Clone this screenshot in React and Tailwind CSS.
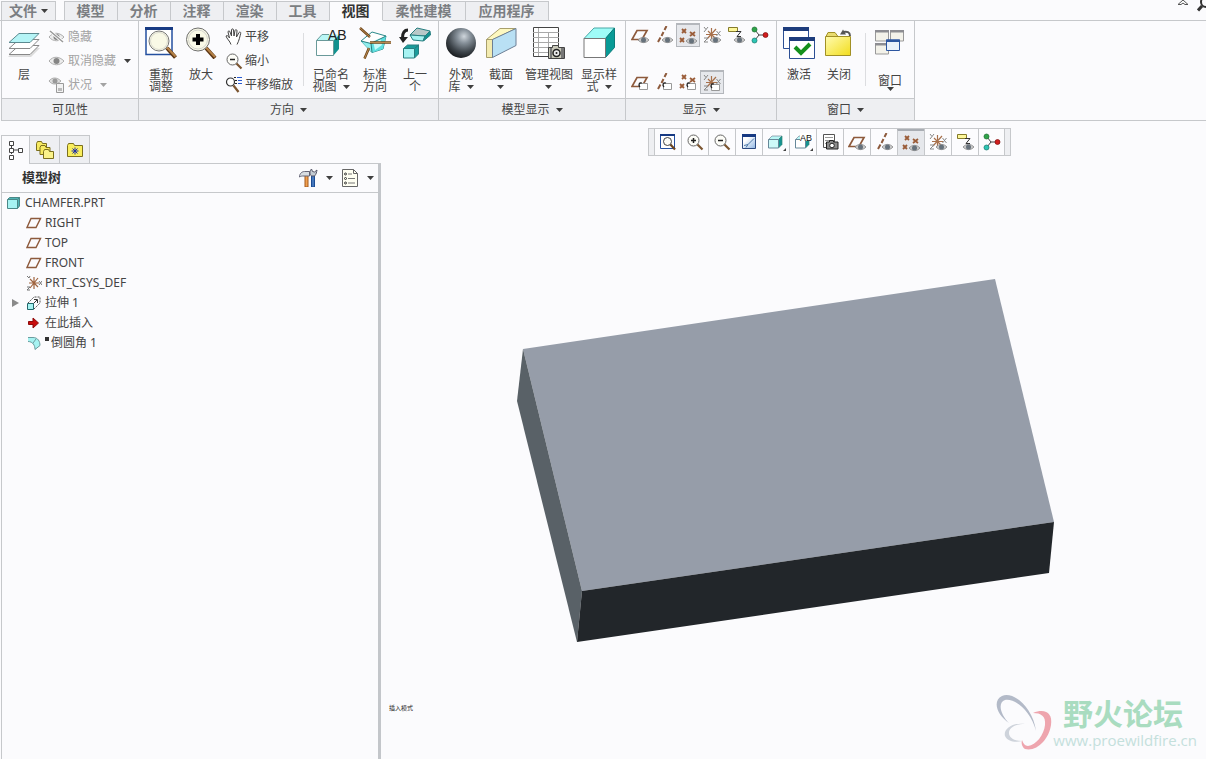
import clsx from "clsx";

const tabs = ["模型", "分析", "注释", "渲染", "工具", "视图", "柔性建模", "应用程序"];

const Icon = ({ w = 32, h = 32, className, children }) => (
  <svg width={w} height={h} viewBox={`0 0 ${w} ${h}`} className={clsx("flex-none", className)} fill="none" aria-hidden="true">
    {children}
  </svg>
);

const Caret = ({ light, className }) => (
  <Icon w={7} h={4} className={clsx("inline-block", className)}>
    <path d="M0 0h7L3.5 4z" fill={light ? "#a3a3a3" : "#3f3f3f"} />
  </Icon>
);

/* ---------- large ribbon icons ---------- */

const LayersIcon = () => (
  <Icon>
    <path d="M9 21h23l-9 9H0z" fill="#dcdcdc" />
    <path d="M11 18.500h20l-9 9H1z" fill="#fff" stroke="#888" />
    <path d="M11 12.500h20l-9 9H1z" fill="#fff" stroke="#888" />
    <path d="M11 6.500h20l-9 9H1z" fill="#b5f4f6" stroke="#5c8a90" />
  </Icon>
);

const RefitIcon = () => (
  <Icon>
    <path d="M1 1.500h26v26H1z" fill="#fff" stroke="#2450a0" strokeWidth="1.500" />
    <path d="M0 0h28v3H0z" fill="#173a83" />
    <path d="M22 21l8.500 9.500" stroke="#5b3514" strokeWidth="4" />
    <path d="M22 20.500l8.500 9" stroke="#b58246" strokeWidth="2" />
    <circle cx="14" cy="14" r="10" fill="#f9f9e6" stroke="#777" />
    <circle cx="14" cy="14" r="8.500" stroke="#dcdcd0" />
  </Icon>
);

const ZoomInBigIcon = () => (
  <Icon>
    <path d="M21 21l9 10" stroke="#5b3514" strokeWidth="4" />
    <path d="M21 20.500l9 9.500" stroke="#b58246" strokeWidth="2" />
    <circle cx="13" cy="12.500" r="11.500" fill="#f9f9e6" stroke="#6f6f6f" />
    <circle cx="13" cy="12.500" r="9.500" stroke="#d5d5cf" />
    <path d="M13 7v11M7.500 12.500h11" stroke="#000" strokeWidth="4" />
  </Icon>
);

const NamedViewIcon = () => (
  <Icon>
    <path d="M1.500 13.500L7 7.500h17l-5 6z" fill="#b9f7f6" />
    <path d="M18.500 13.500L24 8v14l-5.500 6.500z" fill="#12928f" />
    <path d="M1.500 13.500h17v15h-17z" fill="#fff" stroke="#6a9a9a" />
    <path d="M1.500 13.500L7 7.500h7" stroke="#6a9a9a" />
    <text x="13" y="13" fontSize="14" fill="#222" fontFamily="Liberation Sans, sans-serif">AB</text>
  </Icon>
);

const StandardIcon = () => (
  <Icon>
    <path d="M2 14L13 5l14 4-3 13-11 3.500z" fill="#fff" stroke="#2b8a8a" />
    <path d="M2 14l10 2.500 1 9z" fill="#8feeee" />
    <path d="M12 16.500L27 9l-3 13-11 3.500z" fill="#5fe0e0" />
    <path d="M14 14l7-3 2 7-7 5z" fill="#c9fbfa" />
    <path d="M2 14l10 2.500 1 9M12 16.500L27 9" stroke="#267e80" />
    <path d="M1 1l10 9M11 15.500h21M10 21L5.500 31.500" stroke="#6e4519" strokeWidth="2.500" />
    <path d="M1 1l10 9M11 15.500h21M10 21L5.500 31.500" stroke="#b98a50" />
  </Icon>
);

const PreviousIcon = () => (
  <Icon>
    <path d="M9 3C4 3 3.500 7 3.500 11" stroke="#222" strokeWidth="3" />
    <path d="M0 10h9l-5 6z" fill="#222" />
    <path d="M11 8l7-7 13 3-5 5z" fill="#b8c8c8" stroke="#267e80" />
    <path d="M11 8l15 1-2 5-10-1z" fill="#a6f3f2" stroke="#267e80" />
    <path d="M26 9l5-5 .5 4-7 6z" fill="#12928f" stroke="#267e80" />
    <path d="M4.500 21.500l4-3.500h11l-4 3.500zM15.500 21.500L19.500 18v9l-4 4z" fill="#1a9c9b" stroke="#267e80" />
    <path d="M4.500 21.500h11v9.500h-11z" fill="#a6f3f2" stroke="#267e80" />
  </Icon>
);

const AppearanceIcon = () => (
  <Icon>
    <defs>
      <radialGradient id="ball" cx="0.600" cy="0.280" r="0.750">
        <stop offset="0" stopColor="#cfd6dc" />
        <stop offset="0.300" stopColor="#87919a" />
        <stop offset="0.700" stopColor="#3d444a" />
        <stop offset="1" stopColor="#16191c" />
      </radialGradient>
    </defs>
    <circle cx="16" cy="16" r="15" fill="url(#ball)" />
  </Icon>
);

const SectionIcon = () => (
  <Icon>
    <path d="M1.500 12.500L15 1.500h16L8 12.500z" fill="#fdf8c0" stroke="#a89f6c" />
    <path d="M1.500 12.500h6v18h-6z" fill="#f3ebb0" stroke="#a89f6c" />
    <path d="M7.500 12.500l23.500-11v17l-23.500 12z" fill="#b9e0f4" stroke="#6d7f95" />
  </Icon>
);

const ManageViewIcon = () => (
  <Icon>
    <path d="M0.500 0.500h25v29h-25z" fill="#fff" stroke="#444" />
    <path d="M0 5.500h26M0 10.500h26M0 15.500h26M0 20.500h26M0 25.500h26M5.500 1v28M15.500 5v25" stroke="#a8a8a8" />
    <path d="M15.500 20.500h4v-2h6v2h6v11h-16z" fill="#c8c8b8" stroke="#444" />
    <path d="M17 21h2v10h-2zM28 21h3v10h-3z" fill="#777" />
    <circle cx="23.500" cy="26" r="3.500" fill="#eee" stroke="#222" strokeWidth="1.500" />
    <circle cx="23.500" cy="26" r="1" fill="#222" />
  </Icon>
);

const DisplayStyleIcon = () => (
  <Icon>
    <path d="M1 11.500L11 1h20.500l-9 10.500z" fill="#9ffcf8" stroke="#4aa8a6" />
    <path d="M22.500 11.500l9-10.500v19.500l-9 10z" fill="#089a96" stroke="#0a7c7a" />
    <path d="M1 11.500h21.500v19H1z" fill="#fff" stroke="#777" />
  </Icon>
);

const ActivateIcon = () => (
  <Icon>
    <path d="M0.500 0.500h25v21h-25z" fill="#fff" stroke="#2c4f94" />
    <path d="M0 0h26v4H0z" fill="#1d3c7c" />
    <path d="M6.500 10.500h25v21h-25z" fill="#fff" stroke="#2c4f94" />
    <path d="M6 10h26v4H6z" fill="#1d3c7c" />
    <path d="M12 20l6 6 9-9" stroke="#14901c" strokeWidth="4" />
  </Icon>
);

const CloseIcon = () => (
  <Icon>
    <defs>
      <linearGradient id="folder" x1="0" y1="0" x2="1" y2="1">
        <stop offset="0" stopColor="#fffbb0" />
        <stop offset="1" stopColor="#f2dd1c" />
      </linearGradient>
    </defs>
    <path d="M3 9.500l2-4h7l3 4z" fill="#e9dc70" stroke="#a19025" />
    <path d="M2.500 9.500h25v19h-25z" fill="url(#folder)" stroke="#a19025" />
    <path d="M27 9c0-4-3-5-7-4" stroke="#555" strokeWidth="2" />
    <path d="M17 7.500l3-5 3 5z" fill="#555" />
  </Icon>
);

const WindowsIcon = () => (
  <Icon>
    <path d="M1.500 4h13v10h-13zM16.500 4h13v10h-13zM1.500 17h13v10h-13z" fill="#f3f2ea" stroke="#999" />
    <path d="M1 3h14v2.500H1zM16 3h14v2.500H16zM1 16h14v2.500H1z" fill="#8d8d92" />
    <path d="M12.500 13h13v10.500h-13z" fill="#eaf2fb" stroke="#2c56a0" />
    <path d="M12 12.500h14V15H12z" fill="#2c56a0" />
  </Icon>
);

/* ---------- small icons, 18px ---------- */

const SmallEye = () => (
  <g>
    <path d="M7 14c3-3.500 8-3.500 11 0-3 3.500-8 3.500-11 0z" fill="#c8c8c8" stroke="#888" strokeWidth="0.800" />
    <circle cx="12.500" cy="14" r="2.500" fill="#66717b" />
  </g>
);

const SmallTag = () => (
  <g>
    <path d="M8.500 10.500h8v6h-8z" fill="#fff" stroke="#999" />
    <path d="M11 10c-3-1-4 2-2 4" stroke="#222" strokeWidth="1.200" />
  </g>
);

const glyphs = {
  plane: <path d="M6 4.500h10l-5 9H1z" stroke="#8d5a3c" strokeWidth="1.700" />,
  axis: <path d="M11.500 0l-2 4M8.500 6l-2 4M5.500 11.500L3 16" stroke="#8d5a3c" strokeWidth="2" />,
  points: (
    <path d="M3 2l4 4M7 2L3 6M11 5l5 4M16 5l-5 4M1 11l4 4M5 11l-4 4" stroke="#9a5c38" strokeWidth="1.800" />
  ),
  csys: (
    <g>
      <path d="M8.500 2v12M3 8.500h11M5 5l7 7M13 3l-9 10" stroke="#a8714c" strokeWidth="1.200" />
      <path d="M1 1l2 2.500L5 1M3 3.500L1 6M13.500 5l4 5M17.500 5l-4 5M1 12h4l-4 4h4" stroke="#888" />
    </g>
  ),
  note: (
    <g>
      <path d="M1.500 1.500h9v4h-9z" fill="#fdf79a" stroke="#857b2b" />
      <path d="M9 5.500h5l-4 5h4" stroke="#333" />
    </g>
  ),
};

const Glyph = ({ name, mark }) => (
  <Icon w={18} h={18}>
    {glyphs[name]}
    {mark === "eye" && <SmallEye />}
    {mark === "tag" && <SmallTag />}
  </Icon>
);

const SpinIcon = () => (
  <Icon w={18} h={18}>
    <path d="M4 4l4 5h7M8 9l-4 5" stroke="#444" />
    <circle cx="3.500" cy="3.500" r="2.500" fill="#2fa34a" stroke="#1e6e31" strokeWidth="0.700" />
    <circle cx="14.500" cy="9" r="2.500" fill="#d11d1d" stroke="#7d0f0f" strokeWidth="0.700" />
    <circle cx="3.500" cy="14.500" r="2.500" fill="#2dc5b4" stroke="#18776c" strokeWidth="0.700" />
  </Icon>
);

const RefitSmallIcon = () => (
  <Icon w={18} h={18}>
    <path d="M1.500 2.500h14v13h-14z" fill="#fff" stroke="#2450a0" />
    <path d="M1 1h15v2H1z" fill="#173a83" />
    <path d="M11 11l5 5.500" stroke="#6b4522" strokeWidth="2.200" />
    <circle cx="8.500" cy="8.500" r="4" fill="#fdfdf8" stroke="#444" />
  </Icon>
);

const ZoomIcon = ({ plus }) => (
  <Icon w={18} h={18}>
    <path d="M10.500 10.500l6 6" stroke="#7b5530" strokeWidth="2.200" />
    <circle cx="7.500" cy="7.500" r="5.500" fill="#fdfdf8" stroke="#666" />
    <path d="M5 7.500h5" stroke="#222" strokeWidth="1.500" />
    {plus && <path d="M7.500 5v5" stroke="#222" strokeWidth="1.500" />}
  </Icon>
);

const PanZoomIcon = () => (
  <Icon w={18} h={18}>
    <path d="M8.500 9.500l5 6.500" stroke="#7b5530" strokeWidth="2.200" />
    <circle cx="5.500" cy="6" r="4" fill="#fff" stroke="#333" strokeWidth="1.200" />
    <path d="M9 1.500h2M10 4.500h2M10 7.500h2" stroke="#222" />
    <path d="M12 1.500h5M13 4.500h4M13 7.500h4" stroke="#2a5bd0" />
  </Icon>
);

const HandIcon = () => (
  <Icon w={18} h={18}>
    <path
      d="M6 16.500C5 13 1.500 10.500 1 8c1-1 2.500 0 3.500 2L3 4c0-1.500 1.800-1.500 2 0l1.500 4V2c0-1.500 2-1.500 2 0l.5 6 1-5.500c.3-1.300 2-1 2 .3L11.500 9l2.500-4.500c.8-1 2-.3 1.700.8-.7 3-1.700 7.700-3.700 11.200"
      fill="#fff" stroke="#444"
    />
  </Icon>
);

const EyeIcon = ({ off }) => (
  <Icon w={18} h={16}>
    <path d="M1 8c4-5 10-5 15 0-4 5-11 5-15 0z" fill="#ececec" stroke="#adadad" />
    <circle cx="8.500" cy="8" r="3" fill="#858585" />
    {off && <path d="M2 2l13 11" stroke="#fff" strokeWidth="3" />}
    {off && <path d="M2 2l13 11" stroke="#999" strokeWidth="1.500" />}
  </Icon>
);

const StatusIcon = () => (
  <Icon w={18} h={16}>
    <path d="M1 4c3-4 8-4 12 0-4 4-9 4-12 0z" fill="#ddd" stroke="#adadad" />
    <circle cx="7" cy="4" r="2.500" fill="#999" />
    <path d="M8.500 6.500h7v9h-7z" fill="#f2f2f2" stroke="#999" />
    <path d="M10 11h4v3h-4z" fill="#bbb" />
  </Icon>
);

const RepaintIcon = () => (
  <Icon w={18} h={18}>
    <defs>
      <linearGradient id="sheet" x1="0" y1="0" x2="1" y2="1">
        <stop offset="0.300" stopColor="#fff" />
        <stop offset="1" stopColor="#8db4e2" />
      </linearGradient>
    </defs>
    <path d="M2.500 2.500h13v13h-13z" fill="url(#sheet)" stroke="#2c4a80" />
    <path d="M2 1h14v3H2z" fill="#173a83" />
    <path d="M14 5.500l-6 6-4 1M8 11.500l-2 3" stroke="#4c78a8" />
  </Icon>
);

const SmallCubeIcon = ({ text }) => (
  <Icon w={20} h={18}>
    <path d="M2.500 6.500L6 3h10l-3.500 3.500z" fill="#b9f7f6" stroke="#789" strokeWidth="0.700" />
    <path d="M12.500 6.500L16 3v8.500L12.500 15z" fill="#159391" stroke="#387" strokeWidth="0.700" />
    <path d="M2.500 6.500h10V15h-10z" fill={text ? "#fff" : "#cdf9f8"} stroke="#689" />
    {text && <path d="M7 0h13v8H7z" fill="#fff" />}
    {text && <text x="7" y="8" fontSize="9" fill="#111" fontFamily="Liberation Sans, sans-serif">AB</text>}
    <path d="M20 15v3h-3z" fill="#444" />
  </Icon>
);

const CameraListIcon = () => (
  <Icon w={18} h={18}>
    <path d="M2.500 1.500h11v13h-11z" fill="#fff" stroke="#555" />
    <path d="M4 4.500h8M4 7.500h8M4 10.500h3" stroke="#999" />
    <path d="M5.500 9h3V7.500h4V9h4.500v7H5.500z" fill="#8c8c8c" stroke="#222" />
    <circle cx="11" cy="12.500" r="2.300" fill="#fff" stroke="#222" />
  </Icon>
);

/* ---------- model tree icons, 16px ---------- */

const treeIcons = {
  part: (
    <g>
      <path d="M1.500 4.500l2-2h10l-2 2zM11.500 4.500l2-2V11l-2 2.500z" fill="#4fb4b4" stroke="#4a8888" />
      <path d="M1.500 4.500h10v9h-10z" fill="#a6f3f2" stroke="#4a8888" />
    </g>
  ),
  plane: <path d="M5 3.500h9.500L10 12.500H1z" stroke="#8d5a3c" strokeWidth="1.400" />,
  csys: (
    <g>
      <path d="M8 2v12M3 8h10M4 4l8 8M12 3L4 13" stroke="#a0643f" strokeWidth="1.200" />
      <path d="M1 1l2 2 1-2M13 6l3 4M16 6l-3 4M1 12h3l-3 3h3" stroke="#777" />
    </g>
  ),
  extrude: (
    <g>
      <path d="M2 8l6-6h6v6l-6 6" stroke="#555" strokeDasharray="2 1" />
      <path d="M7 9l4-4M8 4.500h3.500V8" stroke="#333" />
      <path d="M1.500 8.500h6v6h-6z" fill="#a6f3f2" stroke="#23686c" />
    </g>
  ),
  insert: <path d="M2.500 6.500H7V3l5.500 5L7 13V9.500H2.500z" fill="#c80d0d" stroke="#8d0b0b" />,
  round: (
    <g>
      <path d="M2 2.500h5c5 0 7 4 7 8l-5 4c0-4-2-7-7-8" fill="#a6f3f2" />
      <path d="M2 2.500h5c5 0 7 4 7 8M2 6.500c5 0 7 4 7 8l5-4M7 8l3-4" stroke="#6c9c9e" />
    </g>
  ),
};

const treeRows = [
  { label: "RIGHT", icon: "plane" },
  { label: "TOP", icon: "plane" },
  { label: "FRONT", icon: "plane" },
  { label: "PRT_CSYS_DEF", icon: "csys" },
  { label: "拉伸 1", icon: "extrude", expandable: true },
  { label: "在此插入", icon: "insert" },
  { label: "倒圆角 1", icon: "round", suppressed: true },
];

/* ---------- ribbon parts ---------- */

const Group = ({ title, caret, className, children }) => (
  <section className={clsx("flex flex-none flex-col border-r border-[#c6c8cb]", className)}>
    <div className="flex h-[77px] px-[2px]">{children}</div>
    <button type="button" className="flex h-[22px] items-center justify-center gap-[6px] border-t border-[#c6c8cb] bg-[#eeeff2]">
      {title}
      {caret && <Caret />}
    </button>
  </section>
);

// label is an array of lines, a caret follows the last line
const BigButton = ({ icon, label, caret, className }) => (
  <button type="button" className={clsx("flex flex-none flex-col items-center pt-[6px]", className)}>
    {icon}
    <span className="mt-[10px] flex flex-col items-center leading-3 whitespace-nowrap">
      {label.map((line, i) => (
        <span key={i} className="flex h-3 items-center gap-[6px]">
          {line}
          {caret && i === label.length - 1 && <Caret />}
        </span>
      ))}
    </span>
  </button>
);

const RowButton = ({ icon, label, disabled, caret }) => (
  <button
    type="button"
    disabled={disabled}
    className={clsx("flex h-6 items-center gap-[2px] whitespace-nowrap", disabled && "text-[#a3a3a3]")}
  >
    {icon}
    {label}
    {caret && <Caret light={caret === "light"} className="ml-[6px]" />}
  </button>
);

const ToggleButton = ({ label, pressed, children }) => (
  <button
    type="button"
    aria-label={label}
    aria-pressed={pressed}
    className={clsx(
      "flex size-6 items-center justify-center",
      pressed && "border border-t-2 border-[#b4b7bc] bg-[#e6e8ec]"
    )}
  >
    {children}
  </button>
);

const Divider = ({ className }) => <div className={clsx("my-3 w-px flex-none bg-[#dcdde0]", className)} />;

const Ribbon = () => (
  <div className="ml-px flex flex-none border-b border-l border-[#c6c8cb]">
    <Group title="可见性" className="w-[137px]">
      <BigButton className="w-10" icon={<LayersIcon />} label={["层"]} />
      <div className="flex flex-col pt-1 pl-1">
        <RowButton icon={<EyeIcon off />} label="隐藏" disabled />
        <RowButton icon={<EyeIcon />} label="取消隐藏" disabled caret="dark" />
        <RowButton icon={<StatusIcon />} label="状况" disabled caret="light" />
      </div>
    </Group>
    <Group title="方向" caret className="w-[300px]">
      <BigButton className="w-10" icon={<RefitIcon />} label={["重新", "调整"]} />
      <BigButton className="w-10" icon={<ZoomInBigIcon />} label={["放大"]} />
      <div className="flex w-[79px] flex-none flex-col pt-1 pl-1">
        <RowButton icon={<HandIcon />} label="平移" />
        <RowButton icon={<ZoomIcon />} label="缩小" />
        <RowButton icon={<PanZoomIcon />} label="平移缩放" />
      </div>
      <Divider className="mx-[3px]" />
      <BigButton className="w-12" icon={<NamedViewIcon />} label={["已命名", "视图"]} caret />
      <BigButton className="w-10" icon={<StandardIcon />} label={["标准", "方向"]} />
      <BigButton className="w-10" icon={<PreviousIcon />} label={["上一", "个"]} />
    </Group>
    <Group title="模型显示" caret className="w-[187px]">
      <BigButton className="w-10" icon={<AppearanceIcon />} label={["外观", "库"]} caret />
      <BigButton className="w-10" icon={<SectionIcon />} label={["截面", ""]} caret />
      <BigButton className="w-14" icon={<ManageViewIcon />} label={["管理视图", ""]} caret />
      <BigButton className="w-11" icon={<DisplayStyleIcon />} label={["显示样", "式"]} caret />
    </Group>
    <Group title="显示" caret className="w-[151px]">
      <div className="flex flex-col justify-between pt-[2px] pb-1">
        <div className="flex">
          <ToggleButton label="平面显示"><Glyph name="plane" mark="eye" /></ToggleButton>
          <ToggleButton label="轴显示"><Glyph name="axis" mark="eye" /></ToggleButton>
          <ToggleButton label="点显示" pressed><Glyph name="points" mark="eye" /></ToggleButton>
          <ToggleButton label="坐标系显示"><Glyph name="csys" mark="eye" /></ToggleButton>
          <ToggleButton label="注释显示"><Glyph name="note" mark="eye" /></ToggleButton>
          <ToggleButton label="旋转中心"><SpinIcon /></ToggleButton>
        </div>
        <div className="flex">
          <ToggleButton label="平面标记"><Glyph name="plane" mark="tag" /></ToggleButton>
          <ToggleButton label="轴标记"><Glyph name="axis" mark="tag" /></ToggleButton>
          <ToggleButton label="点标记"><Glyph name="points" mark="tag" /></ToggleButton>
          <ToggleButton label="坐标系标记" pressed><Glyph name="csys" mark="tag" /></ToggleButton>
        </div>
      </div>
    </Group>
    <Group title="窗口" caret className="w-[138px]">
      <BigButton className="w-10" icon={<ActivateIcon />} label={["激活"]} />
      <BigButton className="w-10" icon={<CloseIcon />} label={["关闭"]} />
      <Divider className="ml-[6px] mr-1" />
      <button type="button" className="flex w-10 flex-col items-center pt-[6px] leading-3">
        <WindowsIcon />
        <span className="mt-4">窗口</span>
        <Caret />
      </button>
    </Group>
  </div>
);

const TabBar = () => (
  <header className="flex h-[21px] flex-none items-end overflow-hidden text-sm font-bold text-[#7b7e82]">
    <div className="h-full w-px border-b border-[#c6c8cb]" />
    <button type="button" className="flex h-5 w-[55px] items-center justify-center gap-1 border border-[#c6c8cb] bg-[#eeeff2] pb-px">
      文件
      <Caret />
    </button>
    <div className="h-full w-2 border-b border-[#c6c8cb]" />
    <nav className="flex border-l border-[#c6c8cb]">
      {tabs.map((tab) => (
        <button
          key={tab}
          type="button"
          className={clsx(
            "flex h-5 items-center justify-center border-t border-r border-b pr-px pb-px",
            tab.length > 2 ? "w-[83px]" : "w-[53px]",
            tab === "视图"
              ? "border-t-[#c6c8cb] border-r-[#c6c8cb] border-b-transparent text-[#333]"
              : "border-[#c6c8cb] bg-[#eeeff2]"
          )}
        >
          {tab}
        </button>
      ))}
    </nav>
    <div className="flex h-full flex-1 items-start justify-end gap-2 border-b border-[#c6c8cb]">
      <button type="button" aria-label="最小化功能区">
        <Icon w={12} h={6}>
          <path d="M1 4.500L6 0l5 4.500H8L6 3 4 4.500z" fill="#fff" stroke="#555" />
        </Icon>
      </button>
      <button type="button" aria-label="搜索">
        <Icon w={9} h={12}>
          <circle cx="9" cy="2" r="5" stroke="#333" strokeWidth="2" />
          <path d="M5 6l-4 4.500" stroke="#333" strokeWidth="3" />
        </Icon>
      </button>
    </div>
  </header>
);

const PanelTab = ({ label, active, children }) => (
  <button
    type="button"
    aria-label={label}
    className={clsx(
      "flex h-[29px] items-center justify-center border-t border-r border-[#c6c8cb]",
      active ? "w-7" : "w-[30px] border-b bg-[#eeeff2]"
    )}
  >
    {children}
  </button>
);

const ModelTree = () => (
  <aside className="ml-px flex w-[380px] flex-none flex-col border-r-[3px] border-[#c3c6ca]">
    <div className="-mr-[3px] flex bg-[#fbfbfd] pt-[14px]">
      <div className="flex border-l border-[#c6c8cb]">
        <PanelTab label="模型树" active>
          <Icon w={16} h={20}>
            <path d="M3.500 6v8M6 10h5" stroke="#444" />
            <path d="M1.500 1.500h4v4h-4zM1.500 8.500h4v4h-4zM1.500 15.500h4v4h-4zM10.500 8.500h4v4h-4z" fill="#fff" stroke="#444" />
          </Icon>
        </PanelTab>
        <PanelTab label="文件夹浏览器">
          <Icon w={20} h={20}>
            <path d="M1.500 3.500l1-2h4l1 2h4v7h-10z" fill="#f6ea62" stroke="#7b6f1d" />
            <path d="M5 7.500l1-2h4l1 2h4v7H5z" fill="#f6ea62" stroke="#7b6f1d" />
            <path d="M8.500 11.500l1-2h4l1 2h4v7h-10z" fill="#fbf38a" stroke="#7b6f1d" />
          </Icon>
        </PanelTab>
        <PanelTab label="收藏夹">
          <Icon w={18} h={18}>
            <path d="M1.500 4.500l1-2h5l1 2h8v11h-15z" fill="#f9ee5c" stroke="#7b6f1d" />
            <path d="M9 6.500v7M5.500 10h7M6.500 7.500l5 5M11.500 7.500l-5 5" stroke="#1c2fa8" />
          </Icon>
        </PanelTab>
      </div>
      <div className="flex-1 border-b border-[#c6c8cb]" />
    </div>
    <div className="flex flex-1 flex-col border-l border-[#c6c8cb]">
      <div className="flex h-[29px] items-center border-b border-[#c6c8cb] pr-1 pl-5">
        <h2 className="flex-1 text-[13px] font-bold text-[#333]">模型树</h2>
        <button type="button" aria-label="设置" className="flex items-center gap-2">
          <Icon w={20} h={20}>
            <path d="M8.500 7v12" stroke="#a3581a" strokeWidth="4" />
            <path d="M8.500 7v11.500" stroke="#f0a050" strokeWidth="2" />
            <path d="M1.500 9c0-4 3-5.500 5-5.500h5V8H6C4 8 3 8 1.500 9z" fill="#d8dde2" stroke="#667" />
            <path d="M15 8v11" stroke="#1c4c94" strokeWidth="4" />
            <path d="M15 8v10.500" stroke="#6fa3e4" strokeWidth="1" />
            <path d="M13.500 1c-2 2-2 5 0 7h3c2-2 2-4 2.500-6l-2.500 2-2-.5z" fill="#c3cbd2" stroke="#556" />
          </Icon>
          <Caret />
        </button>
        <button type="button" aria-label="显示" className="ml-2 flex items-center gap-2">
          <Icon w={18} h={20}>
            <path d="M1.500 1.500h11l4 4v13h-15z" fill="#fffff2" stroke="#666" />
            <path d="M12.500 1.500v4h4" stroke="#666" />
            <circle cx="4.500" cy="6" r="1" stroke="#333" />
            <circle cx="4.500" cy="10.500" r="1" stroke="#333" />
            <circle cx="4.500" cy="15" r="1" stroke="#333" />
            <path d="M7 6h4M7 10.500h7M7 15h7" stroke="#777" />
          </Icon>
          <Caret />
        </button>
      </div>
      <div className="flex h-5 items-center gap-[3px] pl-1">
        <Icon w={16} h={16}>{treeIcons.part}</Icon>
        CHAMFER.PRT
      </div>
      <ul>
        {treeRows.map((row) => (
          <li key={row.label} className="flex h-5 items-center pl-2">
            <span className="w-4">
              {row.expandable && (
                <Icon w={10} h={10}>
                  <path d="M2 1l7 4-7 4z" fill="#8a8a8a" />
                </Icon>
              )}
            </span>
            <Icon w={16} h={16} className="mr-[3px]">{treeIcons[row.icon]}</Icon>
            {row.suppressed && <span className="mr-[2px] mb-2 size-1 bg-[#333]" />}
            {row.label}
          </li>
        ))}
      </ul>
    </div>
  </aside>
);

const viewTools = [
  { label: "重新调整", icon: <RefitSmallIcon /> },
  { label: "放大", icon: <ZoomIcon plus /> },
  { label: "缩小", icon: <ZoomIcon /> },
  { label: "重画", icon: <RepaintIcon /> },
  { label: "显示样式", icon: <SmallCubeIcon /> },
  { label: "已命名视图", icon: <SmallCubeIcon text /> },
  { label: "视图管理器", icon: <CameraListIcon /> },
  { label: "平面显示", icon: <Glyph name="plane" mark="eye" /> },
  { label: "轴显示", icon: <Glyph name="axis" mark="eye" /> },
  { label: "点显示", icon: <Glyph name="points" mark="eye" />, pressed: true },
  { label: "坐标系显示", icon: <Glyph name="csys" mark="eye" /> },
  { label: "注释显示", icon: <Glyph name="note" mark="eye" /> },
  { label: "旋转中心", icon: <SpinIcon /> },
];

const ViewToolbar = () => (
  <div className="absolute top-[7px] left-[267px] flex h-7 border border-[#c6c8cb] bg-[#eeeff2] px-[5px]">
    {viewTools.map((tool) => (
      <button
        key={tool.label}
        type="button"
        aria-label={tool.label}
        aria-pressed={tool.pressed}
        className={clsx(
          "flex w-[27px] items-center justify-center border-l border-[#c6c8cb] last:border-r",
          tool.pressed ? "border-t-2 border-t-[#a9adb3] bg-[#e6e8ec]" : "bg-[#fcfcfe]"
        )}
      >
        {tool.icon}
      </button>
    ))}
  </div>
);

const Watermark = () => (
  <div className="absolute right-[9px] bottom-1.5 flex items-center">
    <Icon w={58} h={58}>
      <path d="M14 28C2 20-3 6 7 1c11-5 31 11 34 35C36 16 20 3 10 5 2 8 6 20 14 28z" fill="#b3bac8" />
      <path d="M30 29c-12-2-22 5-20 12 2 5 10 7 17 5-7 0-13-3-13-8 0-5 6-9 16-9z" fill="#ced3db" />
      <path d="M38 18c12-5 20 0 18 12-2 14-14 27-26 24-3-2-4-6-3-9 1 3 3 6 6 6 8-1 16-11 17-21 1-9-4-12-12-12z" fill="#eea5ae" />
    </Icon>
    <div className="flex flex-col items-end">
      <div className="mr-[14px] font-[Noto_Sans_CJK_SC] text-[30px] leading-8 font-bold text-[#a9dcc0]">野火论坛</div>
      <a href="#" className="font-[Open_Sans] text-[15px] leading-6 text-[#c4e0dc]">www.proewildfire.cn</a>
    </div>
  </div>
);

const Viewport = () => (
  <main className="relative flex-1 overflow-hidden">
    <Icon w={538} h={364} className="absolute top-[158px] left-[136px]">
      <path d="M6 70L478 0l59 243-472 69z" fill="#969da9" />
      <path d="M6 70l59 242-5 51L0 122z" fill="#596167" />
      <path d="M65 312l472-69-5 51-472 69z" fill="#22262a" />
    </Icon>
    <ViewToolbar />
    <p className="absolute bottom-12 left-2 text-[6px] leading-[6px] text-[#222]">插入模式</p>
    <Watermark />
  </main>
);

export default function App() {
  return (
    <div className="flex h-screen flex-col overflow-hidden bg-[#fbfbfd] font-['Noto_Sans','Noto_Sans_CJK_SC',sans-serif] text-xs text-[#444]">
      <TabBar />
      <Ribbon />
      <div className="flex min-h-0 flex-1">
        <ModelTree />
        <Viewport />
      </div>
    </div>
  );
}
